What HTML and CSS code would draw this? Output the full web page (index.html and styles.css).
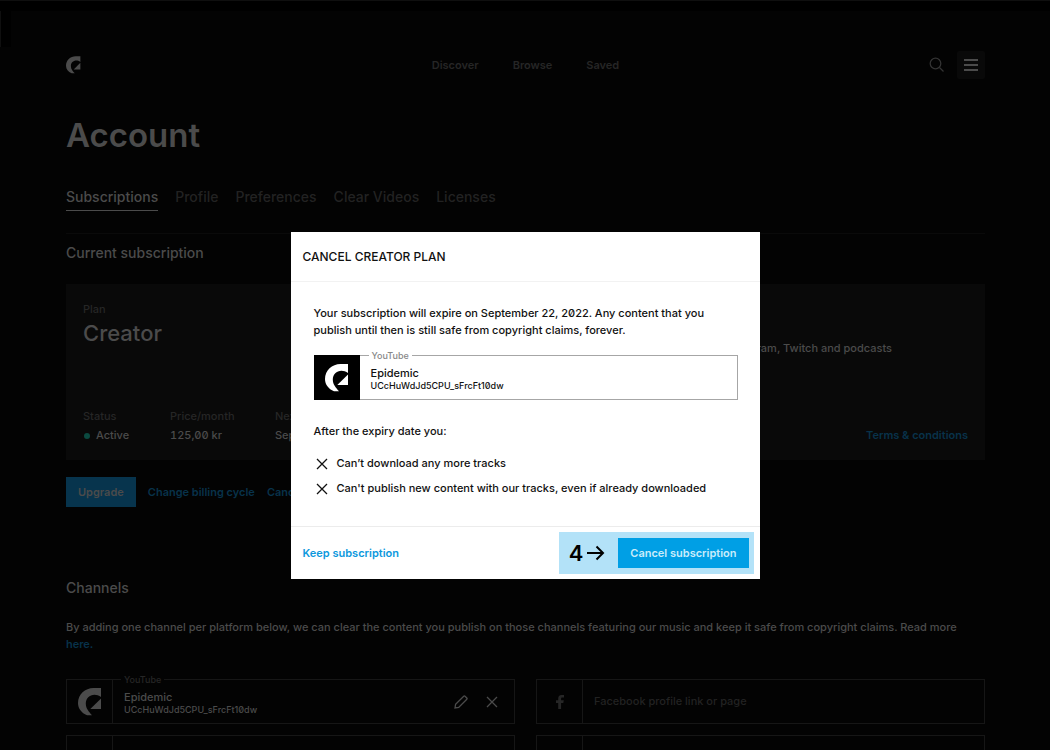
FILE: index.html
```
<!DOCTYPE html>
<html lang="en">
<head>
  <meta charset="UTF-8" />
  <meta name="viewport" content="width=device-width, initial-scale=1.0"/>
  <title>Account</title>
  <link rel="stylesheet" href="styles.css">
</head>
<body>

  <!-- Shared logo -->
  <svg class="defs" width="0" height="0" aria-hidden="true">
    <symbol id="logo" viewBox="0 0 24 28">
      <path d="M23 0v9C21 7.500 18.500 6.800 16.500 6.800 11.500 6.800 7.800 10.600 7.800 15.500c0 5 3 8 6.200 11.800H9C3.500 25 0 20.500 0 15 0 6.500 7 0 15.500 0z"/>
      <path d="M23 10.500V21H12.300z"/>
    </symbol>
  </svg>

  <!-- Header -->
  <header class="header">
    <a class="logo" href="#" aria-label="Home"><svg width="15" height="18"><use href="#logo"/></svg></a>
    <nav class="nav">
      <a href="#">Discover</a>
      <a href="#">Browse</a>
      <a href="#">Saved</a>
    </nav>
    <div class="header-actions">
      <button class="icon-btn" aria-label="Search">
        <svg width="16" height="16" viewBox="0 0 16 16"><circle cx="6.500" cy="6.500" r="5.300"/><path d="M10.500 10.500l4 4"/></svg>
      </button>
      <button class="icon-btn menu-btn" aria-label="Menu">
        <svg width="16" height="14" viewBox="0 0 16 14"><path d="M1 2h14M1 7h14M1 12h14"/></svg>
      </button>
    </div>
  </header>

  <main class="page">
    <h1>Account</h1>

    <nav class="tabs">
      <a class="active" href="#">Subscriptions</a>
      <a href="#">Profile</a>
      <a href="#">Preferences</a>
      <a href="#">Clear Videos</a>
      <a href="#">Licenses</a>
    </nav>

    <!-- Current subscription -->
    <section class="subscription">
      <h2>Current subscription</h2>
      <div class="card">
        <div class="plan">
          <p class="muted">Plan</p>
          <p class="plan-name">Creator</p>
          <dl class="facts">
            <div><dt>Status</dt><dd><span class="dot"></span>Active</dd></div>
            <div><dt>Price/month</dt><dd>125,00 kr</dd></div>
            <div><dt>Next</dt><dd>Sep 22</dd></div>
          </dl>
        </div>
        <div class="coverage">
          <p>Instagram, Twitch and podcasts</p>
          <a href="#">Terms &amp; conditions</a>
        </div>
      </div>
      <div class="plan-actions">
        <button class="btn btn-dim">Upgrade</button>
        <a href="#">Change billing cycle</a>
        <a href="#">Cancel</a>
      </div>
    </section>

    <!-- Channels -->
    <section class="channels">
      <h2>Channels</h2>
      <p>By adding one channel per platform below, we can clear the content you publish on those channels featuring our music and keep it safe from copyright claims. Read more <a href="#">here.</a></p>
      <div class="channel-grid">
        <div class="channel">
          <span class="channel-label">YouTube</span>
          <div class="channel-icon"><svg class="channel-logo" width="24" height="28"><use href="#logo"/></svg></div>
          <div class="channel-text">
            <strong>Epidemic</strong>
            <small>UCcHuWdJd5CPU_sFrcFt10dw</small>
          </div>
          <div class="channel-actions">
            <button class="icon-btn" aria-label="Edit channel">
              <svg width="14" height="14" viewBox="0 0 14 14"><path d="M1 13l.6-3.700L9.700 1.200q.7-.6 1.300 0l1.800 1.800q.6.600 0 1.300L4.700 12.400z"/></svg>
            </button>
            <button class="icon-btn" aria-label="Remove channel">
              <svg width="12" height="12" viewBox="0 0 12 12"><path d="M1 1l10 10M11 1L1 11"/></svg>
            </button>
          </div>
        </div>
        <div class="channel">
          <label class="channel-icon" for="facebook" aria-label="Facebook">
            <svg class="facebook" width="8" height="14" viewBox="0 0 8 14"><path d="M2.200 14V8H0V5.300h2.200V3.500C2.200 1.200 3.400 0 5.500 0H8v2.500H6.300c-.9 0-1.200.4-1.200 1.200v1.600h2.700L7.300 8H5.100v6z"/></svg>
          </label>
          <input id="facebook" type="text" placeholder="Facebook profile link or page">
        </div>
        <div class="channel"><label class="channel-icon" for="channel3"></label><input id="channel3" type="text" aria-label="Channel"></div>
        <div class="channel"><label class="channel-icon" for="channel4"></label><input id="channel4" type="text" aria-label="Channel"></div>
      </div>
    </section>
  </main>

  <!-- Cancel dialog -->
  <div class="overlay">
    <div class="modal" role="dialog" aria-modal="true" aria-labelledby="modal-title">
      <h2 class="modal-header" id="modal-title">CANCEL CREATOR PLAN</h2>
      <div class="modal-body">
        <p>Your subscription will expire on September 22, 2022. Any content that you publish until then is still safe from copyright claims, forever.</p>
        <div class="channel">
          <span class="channel-label">YouTube</span>
          <div class="channel-icon"><svg class="channel-logo" width="24" height="28"><use href="#logo"/></svg></div>
          <div class="channel-text">
            <strong>Epidemic</strong>
            <small>UCcHuWdJd5CPU_sFrcFt10dw</small>
          </div>
        </div>
        <p>After the expiry date you:</p>
        <ul>
          <li><svg width="12" height="12" viewBox="0 0 12 12"><path d="M1 1l10 10M11 1L1 11"/></svg>Can’t download any more tracks</li>
          <li><svg width="12" height="12" viewBox="0 0 12 12"><path d="M1 1l10 10M11 1L1 11"/></svg>Can't publish new content with our tracks, even if already downloaded</li>
        </ul>
      </div>
      <div class="modal-footer">
        <a href="#">Keep subscription</a>
        <div class="step">
          <span>4</span>
          <svg width="18" height="16" viewBox="0 0 18 16"><path d="M0 8h16M9.500 1.500L16 8l-6.500 6.500"/></svg>
          <button class="btn">Cancel subscription</button>
        </div>
      </div>
    </div>
  </div>

</body>
</html>
```
FILE: styles.css
```
* { box-sizing: border-box; margin: 0; padding: 0; }
body { font-family: Inter, 'Liberation Sans', sans-serif; font-size: 11px; font-weight: 500; line-height: 17px; font-feature-settings: "zero"; background: #030303; color: #4b4b4b; height: 100vh; overflow: hidden; }
a { color: #08324a; text-decoration: none; font-weight: 600; }
button, input { font: inherit; color: inherit; background: none; border: none; }
button { cursor: pointer; }
ul { list-style: none; }
svg { display: block; fill: none; stroke: currentColor; stroke-width: 1.3; }
h2 { font-size: 14px; font-weight: 500; line-height: 20px; }
.defs { position: absolute; }

.header { display: grid; grid-template-columns: 1fr auto 1fr; align-items: center; padding: 50px 65px 0 66px; border-top: 1px solid #0f0f0f; background: linear-gradient(#000, #000) 0 0 / 100% 10px no-repeat, linear-gradient(#0f0f0f, #0f0f0f) 0 0 / 1px 46px no-repeat, linear-gradient(#000, #000) 0 0 / 11px 46px no-repeat; }
.logo svg { fill: #4b4b4b; stroke: none; }
.nav { display: flex; gap: 34px; }
.nav a { color: #262626; }
.header-actions { display: flex; justify-content: flex-end; gap: 6px; }
.icon-btn { display: flex; align-items: center; justify-content: center; width: 28px; height: 28px; }
.header-actions .icon-btn { color: #333; }
.header-actions .menu-btn { background: #090909; border-radius: 2px; color: #4b4b4b; }
.menu-btn svg { stroke-width: 2; }

.page { padding: 34px 65px 0 66px; }
h1 { font-size: 33px; font-weight: 600; line-height: 44px; }
.tabs { display: flex; gap: 17px; margin-top: 30px; font-size: 14px; line-height: 20px; padding-bottom: 22px; border-bottom: 1px solid #0a0a0a; }
.tabs a { color: #222; font-weight: 500; padding-bottom: 3px; border-bottom: 1px solid transparent; }
.tabs a.active { color: #4b4b4b; border-color: #4b4b4b; }

.subscription { padding-top: 9px; }
.card { display: flex; justify-content: space-between; margin-top: 21px; padding: 17px 17px 16px; background: #090909; height: 176px; }
.plan { display: flex; flex-direction: column; }
.muted, dt { color: #262626; }
.plan-name { font-size: 22px; line-height: 30px; }
.facts { display: flex; margin-top: auto; }
.facts div { width: 105px; }
.facts div:first-child { width: 87px; }
dt { margin-bottom: 2px; }
dd { display: flex; align-items: center; font-feature-settings: "zero", "tnum"; }
.dot { width: 6px; height: 6px; border-radius: 50%; background: #0b4a40; margin: 0 6px 0 1px; }
.coverage { display: flex; flex-direction: column; justify-content: space-between; align-items: flex-end; padding-top: 39px; }
.coverage p { margin-right: 76px; }
.plan-actions { display: flex; align-items: center; gap: 12px; margin-top: 17px; }
.btn { height: 30px; padding: 0 12px; background: #009fe5; color: #c9ecfb; font-weight: 600; }
.btn-dim { background: #07344d; color: #4b4b4b; }

.channels { padding-top: 71px; }
.channels p { margin-top: 21px; }
.channel-grid { display: grid; grid-template-columns: 1fr 1fr; gap: 11px 21px; margin-top: 26px; }
.channel { position: relative; display: flex; height: 45px; border: 1px solid #161616; }
.channel-label { position: absolute; top: -6px; left: 54px; padding: 0 3px; font-size: 9px; line-height: 11px; background: #030303; color: #262626; }
.channel-icon { display: flex; align-items: center; justify-content: center; width: 46px; border-right: 1px solid #161616; }
.channel-logo, .facebook { fill: #4b4b4b; stroke: none; }
.facebook { fill: #262626; }
.channel-text { display: flex; flex-direction: column; padding: 9px 0 0 11px; }
.channel-text strong { font-weight: 500; line-height: 16px; }
.channel-text small { font-size: 9px; line-height: 10px; }
.channel-actions { display: flex; align-items: center; gap: 3px; margin-left: auto; padding-right: 8px; }
.channel input { flex: 1; padding: 0 11px; outline: none; }
.channel input::placeholder { color: #222; opacity: 1; }

.overlay { position: fixed; inset: 0; display: flex; justify-content: center; align-items: flex-start; padding-top: 232px; }
.modal { width: 469px; background: #fff; color: #111; }
.modal-header { padding: 15px 12px 14px; font-size: 12px; border-bottom: 1px solid #f2f2f2; }
.modal-body { padding: 23px 22px 29px 23px; }
.modal .channel { margin: 16px 0 23px; border-color: #a6a6a6; }
.modal .channel-label { background: #fff; color: #888; }
.modal .channel-icon { background: #000; border: none; margin: -1px 0 -1px -1px; }
.modal .channel-logo { fill: #fff; }
.modal ul { display: flex; flex-direction: column; gap: 8px; margin-top: 15px; }
.modal li { display: flex; align-items: center; gap: 9px; padding-left: 2px; }
.modal-footer { display: flex; align-items: center; justify-content: space-between; padding: 5px 6px 5px 12px; border-top: 1px solid #ececec; }
.modal-footer a { color: #0c98dd; }
.step { display: flex; align-items: center; padding: 6px 5px 6px 10px; background: #b3e2f8; color: #000; }
.step span { font-size: 22px; font-weight: 600; margin-right: 4px; }
.step svg { stroke-width: 2; margin-right: 13px; }
```
